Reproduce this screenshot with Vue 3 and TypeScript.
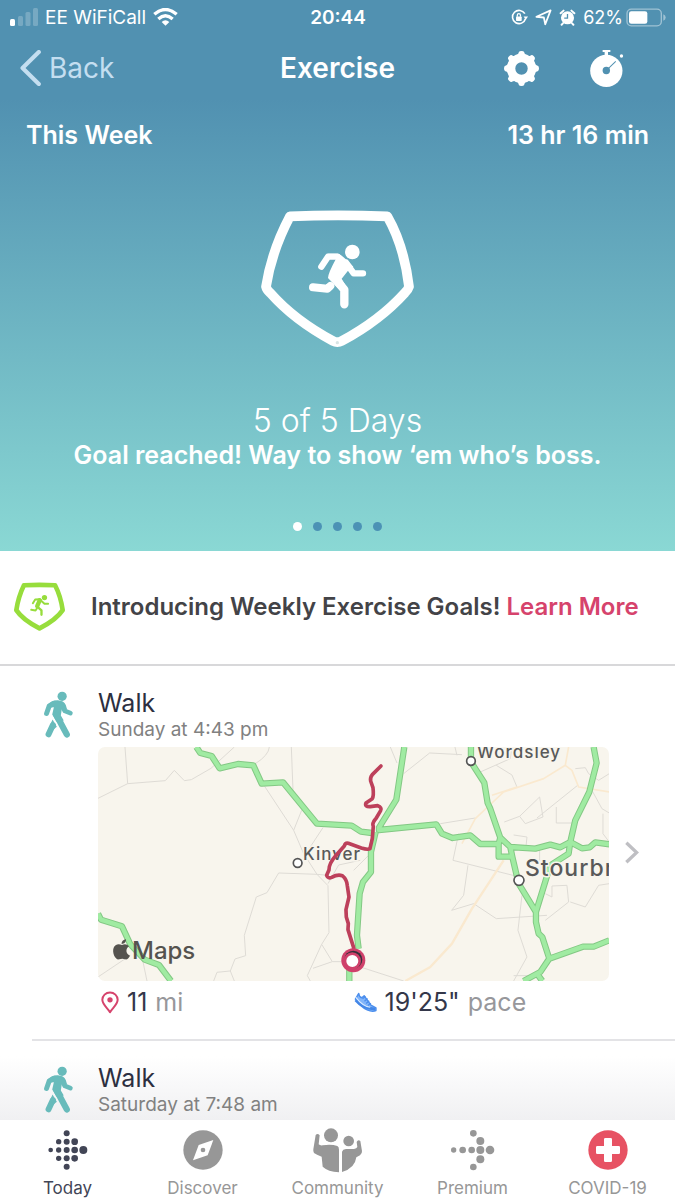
<script setup lang="ts">
import { ref } from 'vue'

interface Exercise {
  id: number
  name: string
  when: string
  distance?: string
  pace?: string
}

const exercises: Exercise[] = [
  { id: 1, name: 'Walk', when: 'Sunday at 4:43 pm', distance: '11', pace: '19\'25"' },
  { id: 2, name: 'Walk', when: 'Saturday at 7:48 am' },
]

const tabs = ['Today', 'Discover', 'Community', 'Premium', 'COVID-19']
const activeTab = ref('Today')
const pages = [1, 2, 3, 4, 5]
const page = ref(1)

// Each dot is [centre x, centre y, radius]
const todayDots = [
  [151, 301, 7], [175, 276, 8], [175, 301, 8], [175, 326, 8],
  [199, 251, 9], [199, 276, 9], [199, 301, 9], [199, 326, 9], [199, 351, 9],
  [223, 276, 10], [223, 301, 10], [223, 326, 10], [249, 301, 12],
]
const premiumDots = [
  [353, 121, 8], [380, 121, 10], [407, 121, 10], [433, 121, 12], [462, 121, 13],
  [412, 71, 10], [433, 94, 12], [433, 149, 12], [412, 172, 10],
]
</script>

<template>
  <div class="screen">
    <header class="hero">
      <div class="status">
        <div class="status-left">
          <svg class="signal" viewBox="0 0 28 18" aria-hidden="true">
            <rect x="0" y="11" width="5" height="7" rx="1.5" fill="#fff" />
            <g fill="#fff" opacity=".22">
              <rect x="8" y="8" width="5" height="10" rx="1.5" />
              <rect x="15.500" y="4" width="5" height="14" rx="1.5" />
              <rect x="23" y="0" width="5" height="18" rx="1.5" />
            </g>
          </svg>
          <span>EE WiFiCall</span>
          <svg class="wifi" viewBox="0 0 75 54" fill="none" stroke="#fff" stroke-width="10" aria-hidden="true">
            <path d="M4 19Q37-10 71 19" />
            <path d="M16 33Q37 14 59 33" />
            <path d="M26 42Q37 32 49 42L37.500 53Z" fill="#fff" stroke="none" />
          </svg>
        </div>
        <span class="clock">20:44</span>
        <div class="status-right">
          <svg class="lock" viewBox="0 0 54 50" aria-hidden="true">
            <path d="M44 13A21 21 0 1 0 46 29" fill="none" stroke="#fff" stroke-width="5" />
            <path d="M40 22H54L47 32Z" fill="#fff" />
            <rect x="16" y="22" width="18" height="14" rx="2" fill="#fff" />
            <path d="M20 23V18a5 5 0 0 1 10 0v5" fill="none" stroke="#fff" stroke-width="4" />
          </svg>
          <svg class="arrow" viewBox="0 0 48 48" aria-hidden="true">
            <path d="M4 22L44 4L29 43L25 24Z" fill="none" stroke="#fff" stroke-width="5" stroke-linejoin="round" />
          </svg>
          <svg class="alarm" viewBox="0 0 50 52" aria-hidden="true">
            <circle cx="25" cy="27" r="20" fill="#fff" />
            <path d="M4 13L13 5M37 5L46 13M11 44L7 48M39 44L43 48" stroke="#fff" stroke-width="6" stroke-linecap="round" />
            <path d="M25 15V28H15" fill="none" stroke="#5191b1" stroke-width="4" />
          </svg>
          <span>62%</span>
          <svg class="battery" viewBox="0 0 120 56" aria-hidden="true">
            <rect x="3" y="3" width="103" height="50" rx="13" fill="none" stroke="#fff" stroke-width="4" opacity=".45" />
            <rect x="9" y="9" width="55" height="38" rx="7" fill="#fff" />
            <path d="M112 18Q119 21 119 28T112 38Z" fill="#fff" opacity=".45" />
          </svg>
        </div>
      </div>

      <nav class="navbar">
        <button class="back" type="button">
          <svg viewBox="0 0 60 104" aria-hidden="true">
            <path d="M54 6L7 52L54 98" fill="none" stroke="currentColor" stroke-width="12" stroke-linecap="round" stroke-linejoin="round" />
          </svg>
          <span>Back</span>
        </button>
        <h1>Exercise</h1>
        <div class="actions">
          <button type="button" aria-label="Settings">
            <svg class="gear" viewBox="-52 -52 104 104" fill="#fff" aria-hidden="true">
              <circle r="31" fill="none" stroke="#fff" stroke-width="25" />
              <path v-for="n in 8" :key="n" :transform="`rotate(${n * 45})`" d="M-16-38Q-9-41-8-48Q-7-52 0-52Q7-52 8-48Q9-41 16-38Z" />
            </svg>
          </button>
          <button type="button" aria-label="Start timer">
            <svg class="stopwatch" viewBox="0 0 100 110" aria-hidden="true">
              <circle cx="48" cy="62" r="48" fill="#fff" />
              <path d="M37 3H60M48 3V18" stroke="#fff" stroke-width="6" />
              <path d="M43 4H53V16H43Z" fill="#fff" />
              <circle cx="93" cy="18" r="5" fill="#fff" />
              <circle cx="48" cy="61" r="11" fill="#5191b1" />
              <path d="M49 60L76 34" stroke="#5191b1" stroke-width="3" />
            </svg>
          </button>
        </div>
      </nav>

      <div class="week">
        <span>This Week</span>
        <span>13 hr 16 min</span>
      </div>

      <svg class="badge" viewBox="60 62 465 414" aria-hidden="true">
        <path d="M150 81Q292 75 442 81Q492 168 507 292Q504 302 495 310Q420 393 305 455Q292 462 279 455Q163 393 90 310Q80 302 78 292Q95 185 150 81Z" fill="none" stroke="#fff" stroke-width="29" stroke-linejoin="round" />
        <circle cx="292" cy="460" r="5" fill="#d9e5e5" />
        <g fill="none" stroke="#fff" stroke-linecap="round" stroke-linejoin="round">
          <path d="M244 232L264 202H293" stroke-width="19" />
          <path d="M318 220L341 252H369" stroke-width="19" />
          <path d="M283 265L313 301V345" stroke-width="25" />
          <path d="M219 294L262 298L271 290" stroke-width="24" />
        </g>
        <path d="M262 193H295Q304 195 340 232L324 244L305 268L320 294L300 304L264 266Q264 252 288 208Z" fill="#fff" />
        <circle cx="337" cy="188" r="22" fill="#fff" />
      </svg>

      <p class="days">5 of 5 Days</p>
      <p class="message">Goal reached! Way to show ‘em who’s boss.</p>
      <div class="pager">
        <button v-for="p in pages" :key="p" type="button" :class="{ on: p === page }" :aria-label="`Page ${p}`" @click="page = p"></button>
      </div>
    </header>

    <section class="intro">
      <svg class="intro-icon" viewBox="42 40 154 146" aria-hidden="true">
        <path d="M72 49Q118 46 166 49Q183 82 189 124Q170 153 119 179Q68 153 49 124Q55 84 72 49Z" fill="none" stroke="#97dd3c" stroke-width="14" stroke-linejoin="round" />
        <circle cx="134" cy="86" r="8" fill="#97dd3c" />
        <g fill="none" stroke="#97dd3c" stroke-linecap="round" stroke-linejoin="round">
          <path d="M99 103L106 92L119 91L134 105H145" stroke-width="6" />
          <path d="M120 94L112 112" stroke-width="13" />
          <path d="M113 114L125 125V138" stroke-width="7" />
          <path d="M94 123L107 125L111 119" stroke-width="6" />
        </g>
      </svg>
      <p>Introducing Weekly Exercise Goals! <a href="#goals">Learn More</a></p>
    </section>

    <main class="list">
      <article v-for="item in exercises" :key="item.id" class="entry">
        <svg class="walker" viewBox="130 361 92 142" fill="none" stroke="#68bbbb" stroke-linecap="round" stroke-linejoin="round" aria-hidden="true">
          <circle cx="187" cy="377" r="14" fill="#68bbbb" stroke="none" />
          <path d="M140 429L148 406L165 398" stroke-width="15" />
          <path d="M186 403L195 421L212 428" stroke-width="14" />
          <path d="M143 402Q156 388 174 389Q192 390 198 403L202 417L186 416L183 435L192 450L170 454L157 432L162 410L150 410Z" fill="#68bbbb" stroke="none" />
          <path d="M170 434L201 492" stroke-width="19" />
          <path d="M159 464L146 492" stroke-width="18" />
          <path d="M151 463L158 447L171 469L160 478Z" fill="#68bbbb" stroke="none" />
        </svg>
        <div class="body">
          <h2>{{ item.name }}</h2>
          <p class="when">{{ item.when }}</p>
          <template v-if="item.distance">
            <svg class="map" viewBox="0 0 511 234" preserveAspectRatio="xMidYMid slice" role="img" aria-label="Route map near Kinver">
              <rect width="511" height="234" fill="#f8f5ed" />
              <g transform="scale(.3333) translate(-23 -20)" fill="none" stroke-linejoin="round">
                <g stroke="#dedbd5" stroke-width="3">
                  <path d="M23 174L112 130L225 121L252 90L282 121L303 118L362 84L432 20M104 20L112 130M495 70Q535 45 537 20M603 20L608 148" />
                  <path d="M523 138L610 270L640 340L680 402L713 436L716 577L694 612L651 706L660 722M634 210L610 270M698 262L640 350M713 430L745 374L810 360" />
                  <path d="M713 405L680 402L565 398L530 457L498 470L462 585L466 646L434 656L420 692L380 696L370 722M420 692L432 722M694 612L726 664L800 664M726 664L668 684M23 710L120 645M155 650L170 722" />
                </g>
                <g transform="translate(780 0)" stroke="#dedbd5" stroke-width="3">
                  <path d="M120 20L140 68M160 100L238 38L335 43M314 20L320 45M270 250L375 233M390 95L480 55L485 20M438 75L485 104L500 140" />
                  <path d="M462 245L508 228L568 170L578 230L525 250L508 228M490 284L530 290L527 320M560 233L682 135M618 200V248H673M568 320V360M325 280L308 360L500 408M353 375L340 465L304 510L370 490L438 535L590 525" />
                  <path d="M515 465L503 570L530 650L490 722M585 540L655 485L650 435L605 437V470L585 460M660 485L705 500L745 435L777 430M675 85L705 82L715 100L745 120L777 100M725 150L755 205L777 218M758 220V280L777 305M30 680L160 722M10 390L65 335M490 706H550" />
                </g>
                <g transform="translate(780 0)" stroke="#fae9cf">
                  <path d="M165 722L240 680L305 610L365 505L460 360" stroke-width="7" />
                  <path d="M335 310L375 235L460 155L580 115L645 75L655 20M645 75L665 90L685 140L777 155M425 165L500 140" stroke-width="5" />
                </g>
                <g stroke="#83c884" stroke-width="19">
                  <path d="M318 20L330 38L364 47L388 84L443 71L489 75L514 130L578 126L680 250L784 256L812 274L845 278M23 520L32 538L95 558L120 612L163 658L206 674L242 722M777 722V650M805 625L800 585L808 460L818 425L842 395V335L856 275" />
                  <g transform="translate(780 0)">
                    <path d="M162 20L138 178L86 262V269L258 252L275 280L307 293L360 285L390 311H445L450 292L420 205L412 188L402 127L362 65V20M450 292L480 320L555 325L600 313L630 321L660 305L695 324L718 321L735 306L777 312M445 311V349H486L480 320M486 349L505 430L557 515V545L565 580L576 590L597 655L570 695L520 722M557 515L600 375L655 340L660 305L675 240L717 155L739 68L730 20M597 655L698 619L730 619L777 600M560 700L576 722" />
                  </g>
                </g>
                <g stroke="#a0eba2" stroke-width="13">
                  <path d="M318 20L330 38L364 47L388 84L443 71L489 75L514 130L578 126L680 250L784 256L812 274L845 278M23 520L32 538L95 558L120 612L163 658L206 674L242 722M777 722V650M805 625L800 585L808 460L818 425L842 395V335L856 275" />
                  <g transform="translate(780 0)">
                    <path d="M162 20L138 178L86 262V269L258 252L275 280L307 293L360 285L390 311H445L450 292L420 205L412 188L402 127L362 65V20M450 292L480 320L555 325L600 313L630 321L660 305L695 324L718 321L735 306L777 312M445 311V349H486L480 320M486 349L505 430L557 515V545L565 580L576 590L597 655L570 695L520 722M557 515L600 375L655 340L660 305L675 240L717 155L739 68L730 20M597 655L698 619L730 619L777 600M560 700L576 722" />
                  </g>
                </g>
                <g fill="#fff" stroke="#555" stroke-width="5">
                  <circle cx="622" cy="368" r="13" />
                  <circle cx="1142" cy="62" r="13" />
                  <circle cx="1286" cy="420" r="15" />
                </g>
              </g>
              <g class="places">
                <text x="205" y="113" font-size="17">Kinver</text>
                <text x="379" y="11" font-size="17">Wordsley</text>
                <text x="427" y="129" font-size="23">Stourbridge</text>
              </g>
              <g transform="scale(.3333) translate(-23 -20)" fill="none" stroke-linejoin="round" stroke-linecap="round">
                <path d="M872 77L846 103Q839 112 841 122L848 142Q851 166 846 175L827 188Q822 200 840 199L862 196Q876 202 871 211L858 233Q844 249 849 258L846 295L839 325Q832 329 813 323L774 309Q765 307 762 317L738 344Q715 370 716 389L709 405Q713 416 724 411Q742 401 756 406Q770 418 771 436L776 470L767 508L768 530L774 550L773 568L790 622V650" stroke="#bd405b" stroke-width="11" />
                <circle cx="789" cy="660" r="36" fill="#cf406b" />
                <circle cx="789" cy="658" r="27" fill="#34313b" />
                <circle cx="786" cy="662" r="22" fill="#fff" stroke="#cf406b" stroke-width="8" />
              </g>
              <g transform="scale(.3333) translate(-23 -20)" fill="#55534f">
                <path d="M95 614C102 610 111 611 116 618C105 625 106 641 119 646C115 654 110 659 104 657C98 654 92 655 87 657C76 661 64 637 70 622C74 612 84 609 95 614Z" />
                <path d="M94 611C93 604 99 598 107 597C108 605 102 611 94 611Z" />
              </g>
              <text class="maps" x="34" y="212" font-size="24">Maps</text>
            </svg>
            <div class="stats">
              <p>
                <svg class="pin" viewBox="0 0 54 68" aria-hidden="true">
                  <path d="M27 63C20 51 4 40 4 26a23 22 0 0 1 46 0C50 40 34 51 27 63Z" fill="none" stroke="#d6436c" stroke-width="6" stroke-linejoin="round" />
                  <circle cx="27" cy="26" r="8" fill="#d6436c" />
                </svg>
                <b>{{ item.distance }}</b> mi
              </p>
              <p>
                <svg class="shoe" viewBox="0 0 68 62" aria-hidden="true">
                  <path d="M14 4L4 21Q18 43 39 53Q54 60 65 55V47L50 39L30 11L23 17Q15 15 14 4Z" fill="#82b5fa" stroke="#4b8eed" stroke-width="4" stroke-linejoin="round" />
                  <path d="M5 24Q24 47 63 51" fill="none" stroke="#4387e8" stroke-width="9" />
                  <path d="M5 15Q25 42 48 45" fill="none" stroke="#dcecff" stroke-width="3" />
                  <path d="M25 20L34 13M31 27L40 19M36 34L45 26M41 40L50 33" stroke="#4b8eed" stroke-width="4" />
                </svg>
                <b>{{ item.pace }}</b> pace
              </p>
            </div>
          </template>
        </div>
        <button v-if="item.distance" class="open" type="button" aria-label="Open walk">
          <svg viewBox="0 0 42 68" aria-hidden="true">
            <path d="M4 5L35 34L4 63" fill="none" stroke="#bfbfc3" stroke-width="10" />
          </svg>
        </button>
      </article>
    </main>

    <nav class="tabs">
      <a v-for="tab in tabs" :key="tab" href="#" :class="{ active: tab === activeTab }" @click.prevent="activeTab = tab">
        <svg v-if="tab === 'Today'" viewBox="143 241 120 120" fill="currentColor" aria-hidden="true">
          <circle v-for="(d, i) in todayDots" :key="i" :cx="d[0]" :cy="d[1]" :r="d[2]" />
        </svg>
        <svg v-else-if="tab === 'Discover'" viewBox="0 0 120 120" aria-hidden="true">
          <circle cx="60" cy="60" r="59" fill="#979797" />
          <path d="M91 30L74 76L30 91L47 45Z" fill="#fff" />
          <circle cx="60" cy="60" r="7" fill="#979797" />
        </svg>
        <svg v-else-if="tab === 'Community'" class="wide" viewBox="37 20 150 138" fill="#979797" aria-hidden="true">
          <circle cx="91" cy="45" r="21" />
          <circle cx="144" cy="62" r="16" />
          <path d="M45 44Q51 38 57 45L54 72Q58 76 66 75Q92 71 110 77Q115 79 115 88V156Q82 154 66 139L63 109Q47 103 40 98Q37 94 38 87Z" />
          <path d="M124 94Q126 87 136 86H160Q168 85 170 80L168 65Q172 56 179 62L184 92Q185 99 178 105L167 111Q163 144 124 155Z" />
        </svg>
        <svg v-else-if="tab === 'Premium'" class="wide" viewBox="336 52 150 138" fill="currentColor" aria-hidden="true">
          <circle v-for="(d, i) in premiumDots" :key="i" :cx="d[0]" :cy="d[1]" :r="d[2]" />
        </svg>
        <svg v-else viewBox="0 0 120 120" aria-hidden="true">
          <circle cx="60" cy="60" r="59" fill="#e75263" />
          <path d="M52 24H68Q72 24 72 28V48H92Q96 48 96 52V68Q96 72 92 72H72V92Q72 96 68 96H52Q48 96 48 92V72H28Q24 72 24 68V52Q24 48 28 48H48V28Q48 24 52 24Z" fill="#fff" />
        </svg>
        <span>{{ tab }}</span>
      </a>
    </nav>
  </div>
</template>

<style>
body {
  margin: 0;
  background: #fff;
}
</style>

<style scoped>
.screen {
  min-height: 100vh;
  display: flex;
  flex-direction: column;
  font-family: Inter, "Liberation Sans", sans-serif;
  color: #2c2f40;
}
.screen * {
  box-sizing: border-box;
}
h1, h2, p {
  margin: 0;
}
svg {
  display: block;
  flex: none;
}
button {
  padding: 0;
  border: 0;
  background: none;
  font: inherit;
  color: inherit;
  cursor: pointer;
}
a {
  text-decoration: none;
}
.hero {
  display: flex;
  flex-direction: column;
  background: linear-gradient(#5191b1 0, #5191b1 18%, #8ad8d4 100%);
  color: #fff;
}
.status {
  height: 34px;
  padding: 0 9px 0 10px;
  display: grid;
  grid-template-columns: 1fr auto 1fr;
  align-items: center;
  font-size: 19px;
}
.status-left, .status-right {
  display: flex;
  align-items: center;
}
.status-left {
  gap: 7px;
}
.status-right {
  gap: 7px;
  justify-content: flex-end;
}
.status-right span {
  font-size: 18px;
}
.clock {
  font-weight: 600;
}
.signal {
  width: 28px;
  height: 18px;
}
.wifi {
  width: 25px;
  height: 18px;
}
.lock, .arrow, .alarm {
  width: 17px;
  height: 17px;
}
.battery {
  width: 40px;
  height: 19px;
  margin-left: -4px;
}
.navbar {
  height: 68px;
  padding: 0 51px 0 20px;
  display: grid;
  grid-template-columns: 1fr auto 1fr;
  align-items: center;
}
.back {
  display: flex;
  align-items: center;
  gap: 8px;
  justify-self: start;
  font-size: 28px;
  color: #c4def0;
}
.back svg {
  width: 21px;
  height: 36px;
}
h1 {
  padding-left: 31px;
  font-size: 28px;
  font-weight: 600;
}
.actions {
  display: flex;
  justify-content: flex-end;
  gap: 51px;
}
.gear {
  width: 35px;
  height: 35px;
}
.stopwatch {
  width: 34px;
  height: 37px;
}
.week {
  padding: 17px 26px 0;
  display: flex;
  justify-content: space-between;
  font-size: 25px;
  line-height: 32px;
  font-weight: 600;
}
.badge {
  width: 155px;
  height: 138px;
  margin: 59px auto 0;
}
.days {
  margin-top: 54px;
  text-align: center;
  font-size: 32px;
  line-height: 38px;
  font-weight: 350;
}
.message {
  text-align: center;
  font-size: 25px;
  line-height: 30px;
  font-weight: 600;
}
.pager {
  padding: 52px 0 20px;
  display: flex;
  justify-content: center;
  gap: 11px;
}
.pager button {
  width: 9px;
  height: 9px;
  border-radius: 50%;
  background: #4c92b5;
}
.pager .on {
  background: #fff;
}
.intro {
  height: 115px;
  padding: 0 14px 2px;
  display: flex;
  align-items: center;
  gap: 26px;
  border-bottom: 2px solid #d8d8da;
  font-size: 24px;
  font-weight: 600;
  color: #434347;
}
.intro-icon {
  width: 51px;
  height: 49px;
}
.intro a {
  color: #d6436c;
}
.list {
  flex: 1;
  background: linear-gradient(#fff 0, #fff 86%, #f0f0f2 100%);
}
.entry {
  margin-left: 32px;
  padding-left: 11px;
  display: grid;
  grid-template-columns: 31px 1fr 66px;
}
.entry + .entry {
  border-top: 2px solid #e3e3e6;
}
.walker {
  width: 31px;
  height: 47px;
  margin-top: 25px;
}
.body {
  min-width: 0;
  padding: 21px 0 0 24px;
}
h2 {
  font-size: 25px;
  line-height: 32px;
  font-weight: 400;
}
.when {
  font-size: 19px;
  line-height: 22px;
  color: #818181;
}
.map {
  width: 100%;
  height: auto;
  margin-top: 6px;
  border-radius: 7px;
}
.places text {
  fill: #595959;
  stroke: #f8f5ed;
  stroke-width: 3px;
  paint-order: stroke;
  font-weight: 500;
  letter-spacing: 1px;
}
.maps {
  fill: #55534f;
  font-weight: 500;
}
.stats {
  height: 58px;
  padding-top: 5px;
  display: grid;
  grid-template-columns: 1fr 1fr;
  align-content: start;
  font-size: 25px;
  line-height: 32px;
  color: #97979b;
}
.stats p {
  display: flex;
  align-items: center;
  gap: 8px;
}
.stats b {
  font-weight: 400;
  color: #34374a;
}
.pin {
  width: 18px;
  height: 23px;
  margin-left: 3px;
}
.shoe {
  width: 23px;
  height: 21px;
}
.open {
  align-self: center;
  justify-self: start;
  margin-left: 16px;
}
.open svg {
  width: 14px;
  height: 23px;
}
.tabs {
  position: sticky;
  bottom: 0;
  height: 80px;
  display: grid;
  grid-template-columns: repeat(5, 1fr);
  background: #fff;
}
.tabs a {
  display: flex;
  flex-direction: column;
  align-items: center;
  justify-content: flex-end;
  padding-bottom: 1px;
  gap: 7px;
  font-size: 17px;
  line-height: 22px;
  color: #979797;
}
.tabs a.active {
  color: #424556;
}
.tabs svg {
  width: 40px;
  height: 40px;
}
.tabs .wide {
  width: 50px;
  height: 46px;
  margin-bottom: -3px;
}
</style>
